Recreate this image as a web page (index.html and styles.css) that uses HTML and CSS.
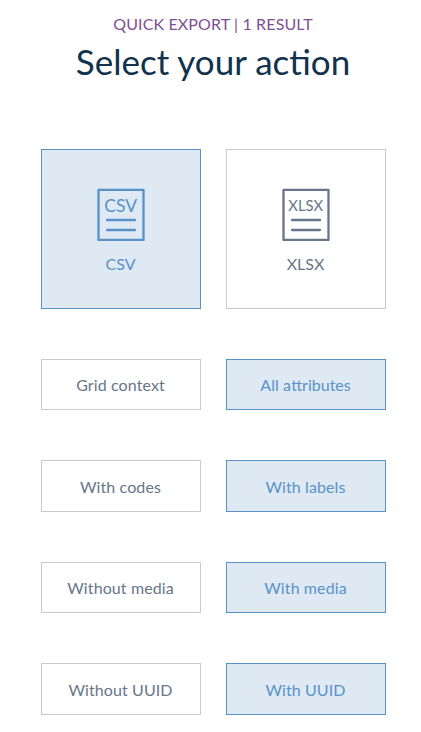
FILE: index.html
```html
<!DOCTYPE html>
<html lang="en">
<head>
<meta charset="utf-8">
<title>Quick export</title>
<link rel="stylesheet" href="styles.css">
</head>
<body>
<main class="export">
  <p class="subtitle"><span class="spaced">QUICK EXPORT | 1 RESULT</span></p>
  <h1 class="title">Select your action</h1>
  <div class="row formats">
    <div class="tile on">
      <svg class="icon" viewBox="0 0 48 53" width="48" height="53"><rect x="1.5" y="1.9" width="45" height="50"/><path d="M10 32h28M10 42h28"/><text class="csv" x="23.6" y="24.3">CSV</text></svg>
      <span class="label">CSV</span>
    </div>
    <div class="tile">
      <svg class="icon" viewBox="0 0 48 53" width="48" height="53"><rect x="1.5" y="1.9" width="45" height="50"/><path d="M10 32h28M10 42h28"/><text class="xlsx" x="23.7" y="23">XLSX</text></svg>
      <span class="label">XLSX</span>
    </div>
  </div>
  <div class="options">
    <div class="row"><div class="option">Grid context</div><div class="option on">All a<span class="lig">ttributes</span></div></div>
    <div class="row"><div class="option">With codes</div><div class="option on">With labels</div></div>
    <div class="row"><div class="option">Without media</div><div class="option on">With media</div></div>
    <div class="row last"><div class="option">Without UUID</div><div class="option on">With UUID</div></div>
  </div>
</main>
</body>
</html>
```
FILE: styles.css
```css
* { box-sizing: border-box; }
body { margin: 0; background: #fff; font-family: Lato, "Liberation Sans", sans-serif; font-size: 16px; color: #67768a; overflow: hidden; }
.export { width: 345px; margin-left: 41px; padding-top: 14px; }
.subtitle { margin: 0; padding-right: 1px; line-height: 20px; text-align: center; color: #7f4f94; }
.spaced { letter-spacing: 0.13px; }
.title { margin: 3px 0 64px; padding-right: 1px; font-size: 35px; font-weight: 400; line-height: 48px; text-align: center; color: #11324d; white-space: nowrap; }
.row { display: grid; grid-template-columns: 160px 160px; gap: 25px; }
.tile { height: 160px; border: 1px solid #c7c9d5; display: flex; flex-direction: column; align-items: center; padding-top: 38px; }
.tile.on, .option.on { border-color: #5992c7; background: #dee9f4; color: #5992c7; }
.icon { display: block; fill: none; stroke: currentColor; stroke-width: 2.3; stroke-linecap: round; stroke-linejoin: round; }
.icon text { fill: currentColor; stroke: none; text-anchor: middle; }
.csv { font-size: 17.5px; }
.xlsx { font-size: 14.8px; }
.label { margin-top: 13px; padding-right: 1px; line-height: 20px; }
.options { margin-top: 50px; display: grid; gap: 50px; }
.option { height: 51.4px; padding-right: 1px; border: 1px solid #c7c9d5; display: flex; align-items: center; justify-content: center; letter-spacing: 0.1px; white-space: pre; }
.last .option { padding-top: 1px; }
.lig { letter-spacing: normal; }
```
